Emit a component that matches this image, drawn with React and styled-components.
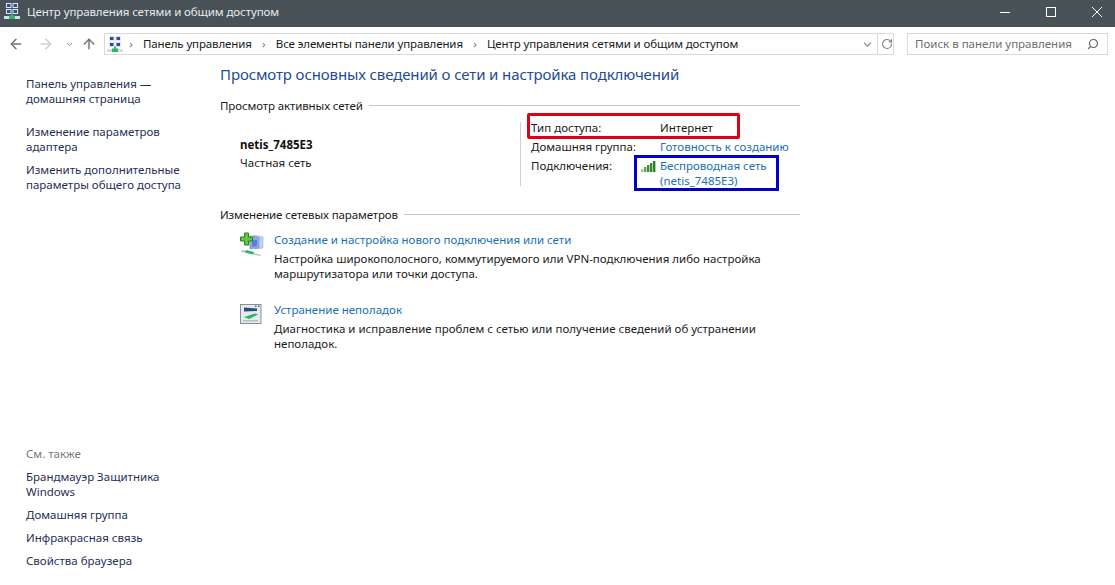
import React from 'react';
import styled, { createGlobalStyle } from 'styled-components';
import { ArrowLeft, ArrowRight, ArrowUp, ChevronDown, RotateCw, Search } from 'lucide-react';

const GlobalStyle = createGlobalStyle`
	html, body {
		margin: 0;
		padding: 0;
		background: #fff;
	}
	body {
		font-family: "Noto Sans", "Open Sans", sans-serif;
		font-size: 11.5px;
		line-height: 15px;
		color: #1a1a1a;
	}
`;

const ControlPanelIcon = () => (
	<svg width="16" height="17" viewBox="0 0 16 17">
		<rect x="2" y="0" width="5.5" height="5" fill="#dfe6f2" />
		<rect x="8.5" y="0" width="5.5" height="5" fill="#dfe6f2" />
		<rect x="2" y="6" width="5.5" height="5" fill="#dfe6f2" />
		<rect x="8.5" y="6" width="5.5" height="5" fill="#dfe6f2" />
		<rect x="3" y="1" width="3.5" height="3" fill="#2c4f9c" />
		<rect x="9.5" y="1" width="3.5" height="3" fill="#2c4f9c" />
		<rect x="3" y="7" width="3.5" height="3" fill="#2c4f9c" />
		<rect x="9.5" y="7" width="3.5" height="3" fill="#2c4f9c" />
		<rect x="0" y="13" width="16" height="3" fill="#d9dfd8" />
		<path d="M7 10.5 H9 V12.5 H11 V16 H5 V12.5 H7 Z" fill="#2fb56c" />
	</svg>
);

const SignalIcon = () => (
	<svg width="16" height="12" viewBox="0 0 16 12">
		<rect x="0" y="8" width="2.4" height="3" fill="#9cc98f" />
		<rect x="3" y="6" width="2.4" height="5" fill="#5fa552" />
		<rect x="6" y="4" width="2.4" height="7" fill="#3f9138" />
		<rect x="9" y="2" width="2.4" height="9" fill="#358a30" />
		<rect x="12" y="0" width="2.4" height="11" fill="#2e8229" />
	</svg>
);

const NewConnectionIcon = () => (
	<svg width="24" height="24" viewBox="0 0 24 24">
		<path d="M13 3 L23 5 V16 L15 17 Z" fill="#c3d2f0" stroke="#9fb2dc" strokeWidth="0.6" />
		<path d="M9 4 L19 5 V16 L10 17 Z" fill="#8fa9e6" stroke="#7590d0" strokeWidth="0.6" />
		<path d="M12 8 L17 8 V14 L12 15 Z" fill="#5a7fd6" />
		<path d="M2 18 L21 23 L20 24 L1 19.5 Z" fill="#aeb8bc" />
		<path d="M6 18 L14 20 L13 22.5 L5 20.5 Z" fill="#2cb468" />
		<path d="M4.5 1 H8.5 V5 H12.5 V9 H8.5 V13 H4.5 V9 H0.5 V5 H4.5 Z" fill="#63c544" stroke="#2d7f22" strokeWidth="1" />
	</svg>
);

const TroubleshootIcon = () => (
	<svg width="22" height="20" viewBox="0 0 22 20">
		<rect x="0.5" y="0.5" width="20.5" height="19" fill="#e6eaec" stroke="#868f94" />
		<path d="M4 3.5 L17 4.5 V7 L4 7.5 Z" fill="#2a4a86" />
		<rect x="15" y="1.5" width="1.5" height="1.5" fill="#5d6a74" />
		<rect x="18" y="1.5" width="1.5" height="1.5" fill="#5d6a74" />
		<path d="M4 13 L15 9.5 L18 10.5 L9 15 Z" fill="#2cb468" />
		<path d="M3 16 H18 V17.5 H3 Z" fill="#b5bfc4" />
	</svg>
);

const App = () => {
	return (
		<Page>
			<GlobalStyle />
			<TitleBar>
				<TitleGroup>
					<ControlPanelIcon />
					<TitleText>Центр управления сетями и общим доступом</TitleText>
				</TitleGroup>
				<WindowButtons>
					<WindowButton>
						<svg width="12" height="12" viewBox="0 0 12 12"><path d="M1 6.5 H11" stroke="#fff" /></svg>
					</WindowButton>
					<WindowButton>
						<svg width="12" height="12" viewBox="0 0 12 12"><rect x="1.5" y="1.5" width="9" height="9" fill="none" stroke="#fff" /></svg>
					</WindowButton>
					<WindowButton>
						<svg width="12" height="12" viewBox="0 0 12 12"><path d="M1 1 L11 11 M11 1 L1 11" stroke="#fff" /></svg>
					</WindowButton>
				</WindowButtons>
			</TitleBar>
			<NavBar>
				<NavArrows>
					<NavButton><ArrowLeft size={16} strokeWidth={2.2} /></NavButton>
					<NavButton $disabled><ArrowRight size={16} strokeWidth={2.2} /></NavButton>
					<NavChevron><ChevronDown size={9} strokeWidth={2.5} /></NavChevron>
					<NavButton><ArrowUp size={16} strokeWidth={2.2} /></NavButton>
				</NavArrows>
				<AddressBox>
					<ControlPanelIcon />
					<Crumbs>
						<Sep>›</Sep><span>Панель управления</span>
						<Sep>›</Sep><span>Все элементы панели управления</span>
						<Sep>›</Sep><span>Центр управления сетями и общим доступом</span>
					</Crumbs>
					<AddressTools>
						<ChevronDown size={13} strokeWidth={2} />
						<ToolDivider />
						<RotateCw size={12} strokeWidth={2.2} />
					</AddressTools>
				</AddressBox>
				<SearchBox>
					<span>Поиск в панели управления</span>
					<SearchGlyph size={12} strokeWidth={2.4} />
				</SearchBox>
			</NavBar>
			<Body>
				<Sidebar>
					<SideGroup>
						<SideLink $major>Панель управления —<br />домашняя страница</SideLink>
						<SideLink>Изменение параметров<br />адаптера</SideLink>
						<SideLink>Изменить дополнительные<br />параметры общего доступа</SideLink>
					</SideGroup>
					<SideGroup>
						<SideCaption>См. также</SideCaption>
						<SideLink>Брандмауэр Защитника<br />Windows</SideLink>
						<SideLink>Домашняя группа</SideLink>
						<SideLink>Инфракрасная связь</SideLink>
						<SideLink>Свойства браузера</SideLink>
					</SideGroup>
				</Sidebar>
				<Content>
					<Heading>Просмотр основных сведений о сети и настройка подключений</Heading>
					<SectionTitle>Просмотр активных сетей</SectionTitle>
					<NetworkRow>
						<NetworkName>
							<strong>netis_7485E3</strong>
							<span>Частная сеть</span>
						</NetworkName>
						<InfoGrid>
							<span>Тип доступа:</span>
							<span>Интернет</span>
							<span>Домашняя группа:</span>
							<Link>Готовность к созданию</Link>
							<span>Подключения:</span>
							<ConnectionLink>
								<SignalIcon />
								<Link>Беспроводная сеть<br />(netis_7485E3)</Link>
							</ConnectionLink>
							<RedMark />
							<BlueMark />
						</InfoGrid>
					</NetworkRow>
					<SectionTitle>Изменение сетевых параметров</SectionTitle>
					<Tasks>
						<Task>
							<TaskIcon><NewConnectionIcon /></TaskIcon>
							<div>
								<Link>Создание и настройка нового подключения или сети</Link>
								<p>Настройка широкополосного, коммутируемого или VPN-подключения либо настройка<br />маршрутизатора или точки доступа.</p>
							</div>
						</Task>
						<Task>
							<TaskIcon $offset><TroubleshootIcon /></TaskIcon>
							<div>
								<Link>Устранение неполадок</Link>
								<p>Диагностика и исправление проблем с сетью или получение сведений об устранении<br />неполадок.</p>
							</div>
						</Task>
					</Tasks>
				</Content>
			</Body>
		</Page>
	);
};

const Page = styled.div`
	width: 1115px;
	height: 585px;
	display: flex;
	flex-direction: column;
	overflow: hidden;
	background: #fff;
`;

const TitleBar = styled.div`
	height: 27px;
	flex: none;
	box-sizing: border-box;
	background: #495257;
	display: flex;
	align-items: center;
	justify-content: space-between;
	padding: 0 0 4px 4px;
`;

const TitleGroup = styled.div`
	display: flex;
	align-items: center;
	gap: 7px;
`;

const TitleText = styled.span`
	font-size: 11.5px;
	letter-spacing: -0.1px;
	color: #e8eaeb;
`;

const WindowButtons = styled.div`
	display: flex;
	margin-right: -5px;
`;

const WindowButton = styled.div`
	width: 46px;
	height: 23px;
	display: flex;
	align-items: center;
	justify-content: center;
`;

const NavBar = styled.div`
	height: 34px;
	flex: none;
	box-sizing: border-box;
	display: flex;
	align-items: flex-start;
	padding-top: 6px;
`;

const NavArrows = styled.div`
	width: 104px;
	height: 22px;
	flex: none;
	box-sizing: border-box;
	padding-left: 1px;
	display: grid;
	grid-template-columns: 30px 30px 16px 24px;
	align-items: center;
`;

const NavButton = styled.div`
	display: flex;
	justify-content: center;
	color: ${(p) => (p.$disabled ? "#cfcfcf" : "#73777a")};
`;

const NavChevron = styled.div`
	display: flex;
	justify-content: center;
	color: #888;
`;

const AddressBox = styled.div`
	width: 790px;
	height: 22px;
	flex: none;
	box-sizing: border-box;
	border: 1px solid #d9d9d9;
	display: flex;
	align-items: center;
	padding-left: 2px;
`;

const Crumbs = styled.div`
	flex: 1;
	margin: -2px 0 0 -4px;
	display: flex;
	align-items: center;
	white-space: nowrap;
	letter-spacing: -0.12px;
`;

const Sep = styled.span`
	width: 24px;
	text-align: center;
	color: #777;
`;

const AddressTools = styled.div`
	display: flex;
	align-items: center;
	gap: 3px;
	color: #808080;
`;

const ToolDivider = styled.div`
	width: 1px;
	height: 20px;
	background: #d9d9d9;
`;

const SearchBox = styled.div`
	width: 201px;
	height: 22px;
	margin-left: 13px;
	flex: none;
	box-sizing: border-box;
	border: 1px solid #d9d9d9;
	display: flex;
	align-items: center;
	justify-content: space-between;
	padding: 0 8px 1px 7px;
	color: #6d6d6d;
`;

const SearchGlyph = styled(Search)`
	transform: scaleX(-1);
	color: #666;
`;

const Body = styled.div`
	flex: 1;
	display: flex;
	min-height: 0;
`;

const Sidebar = styled.div`
	width: 220px;
	flex: none;
	box-sizing: border-box;
	padding: 15px 0 17px 26px;
	display: flex;
	flex-direction: column;
	justify-content: space-between;
`;

const SideGroup = styled.div`
	display: flex;
	flex-direction: column;
	gap: 8px;
`;

const SideLink = styled.div`
	color: #1f2f57;
	margin-bottom: ${(p) => (p.$major ? "10px" : "0")};
`;

const SideCaption = styled.div`
	color: #7a7a7a;
`;

const Content = styled.div`
	width: 580px;
	flex: none;
	padding-top: 3px;
`;

const Heading = styled.h1`
	margin: 0 0 14px;
	font-size: 15px;
	line-height: 20px;
	font-weight: 400;
	letter-spacing: -0.12px;
	color: #1d4d94;
	white-space: nowrap;
`;

const SectionTitle = styled.div`
	display: flex;
	align-items: center;
	gap: 6px;
	letter-spacing: -0.12px;
	&::after {
		content: "";
		flex: 1;
		height: 1px;
		background: #c8c8c8;
	}
`;

const NetworkRow = styled.div`
	display: flex;
	height: 87px;
	padding-top: 7px;
`;

const NetworkName = styled.div`
	width: 280px;
	padding: 17px 0 0 20px;
	display: flex;
	flex-direction: column;
	gap: 3px;
	strong {
		font-weight: 700;
		color: #111;
	}
`;

const InfoGrid = styled.div`
	position: relative;
	width: 269px;
	padding-left: 11px;
	display: grid;
	grid-template-columns: 129px 1fr;
	grid-auto-rows: min-content;
	row-gap: 4px;
	align-content: start;
	&::before {
		content: "";
		position: absolute;
		left: 0;
		top: 2px;
		width: 1px;
		height: 64px;
		background: #cfcfcf;
	}
`;

const Link = styled.div`
	color: #1a6fb5;
`;

const ConnectionLink = styled.div`
	display: flex;
	margin-left: -19px;
	gap: 3px;
	svg {
		margin-top: 3px;
	}
`;

const RedMark = styled.div`
	position: absolute;
	left: 7px;
	top: -7px;
	width: 213px;
	height: 26px;
	box-sizing: border-box;
	border: 3px solid #e00016;
	border-radius: 2px;
`;

const BlueMark = styled.div`
	position: absolute;
	left: 114px;
	top: 35px;
	width: 145px;
	height: 36px;
	box-sizing: border-box;
	border: 3px solid #0000c8;
`;

const Tasks = styled.div`
	padding: 10px 0 0 20px;
	display: flex;
	flex-direction: column;
	gap: 21px;
	p {
		margin: 4px 0 0;
	}
`;

const Task = styled.div`
	display: flex;
	white-space: nowrap;
`;

const TaskIcon = styled.div`
	width: 34px;
	flex: none;
	padding-top: ${(p) => (p.$offset ? "2px" : "0")};
`;

export default App;
